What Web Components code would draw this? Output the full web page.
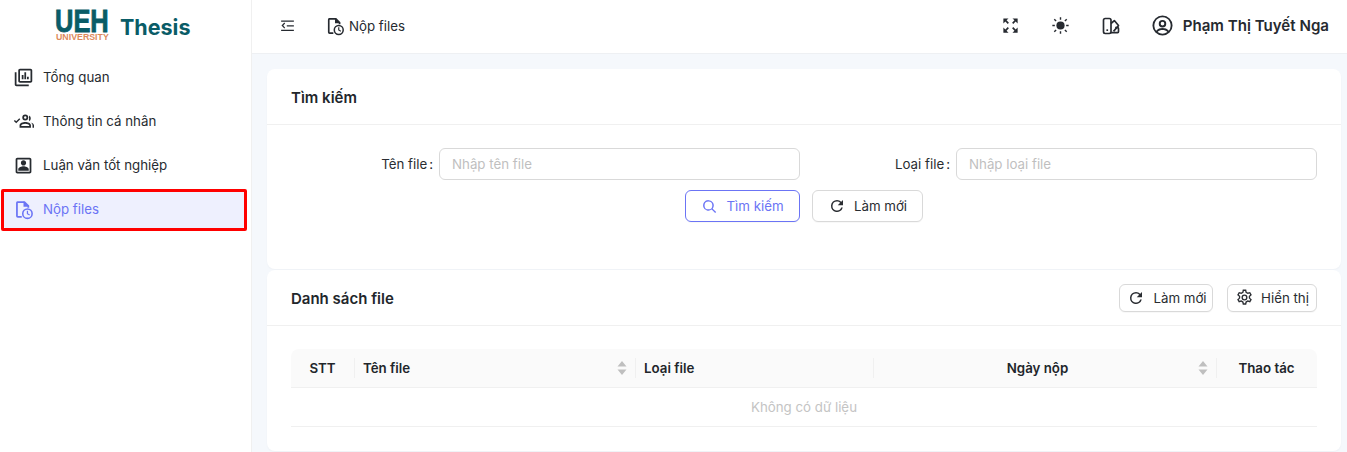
<!DOCTYPE html>
<html>
<head>
<meta charset="utf-8">
<style>
  html, body { margin: 0; height: 100%; overflow: hidden; }
  body { font-family: Inter, "Noto Sans", sans-serif; font-size: 13.3px; color: #1f2328; background: #f5f8fc; }
</style>
</head>
<body>
<app-shell>
  <side-bar slot="side">
    <nav-item icon="books" label="Tổng quan"></nav-item>
    <nav-item icon="people" label="Thông tin cá nhân"></nav-item>
    <nav-item icon="badge" label="Luận văn tốt nghiệp"></nav-item>
    <nav-item icon="file" label="Nộp files" active></nav-item>
  </side-bar>
  <top-bar slot="top"></top-bar>
  <search-card></search-card>
  <file-list></file-list>
</app-shell>

<script>
const ICONS = {
  books: `<path d="M4 6H2v14c0 1.1.9 2 2 2h14v-2H4V6zm16-4H8c-1.1 0-2 .9-2 2v12c0 1.1.9 2 2 2h12c1.1 0 2-.9 2-2V4c0-1.1-.9-2-2-2zm0 14H8V4h12v12zM10 9h2v5h-2zm3-3h2v8h-2zm3 5h2v3h-2z"/>`,
  people: `<path d="M14 4a3.400 3.400 0 1 0 0 6.800a3.400 3.400 0 0 0 0-6.800zm0 2a1.400 1.400 0 1 1 0 2.800a1.400 1.400 0 0 1 0-2.800zM19 5.200l-.9 1.700a3.400 3.400 0 0 1 0 3l.9 1.700a5 5 0 0 0 0-6.400zM14 12.500c-2.800 0-6.500 1.300-6.500 3.900V19h13v-2.600c0-2.600-3.700-3.900-6.500-3.900zm0 2c2.200 0 4.300.9 4.500 1.900v.6h-9v-.6c.2-1 2.300-1.900 4.500-1.900zM20 13c1.500.7 2.300 1.900 2.300 3.400V19H24v-2.800c0-1.500-1.700-2.600-4-3.200zM1 11.300l1.100-1.100 1.600 1.600 3.500-3.500 1.100 1.100-4.600 4.600z"/>`,
  badge: `<path d="M19 5v14H5V5h14m0-2H5c-1.110 0-2 .9-2 2v14c0 1.100.89 2 2 2h14c1.100 0 2-.9 2-2V5c0-1.100-.9-2-2-2zm-7 9c-1.650 0-3-1.350-3-3s1.350-3 3-3 3 1.350 3 3-1.350 3-3 3zm6 6H6v-1.530c0-2.500 3.970-3.580 6-3.580s6 1.080 6 3.580V18z"/>`,
  file: `<path d="M5 2.500h8.500l5 5V10h-2V8.300L12.700 4.500H5.500v15H10v2H5.500A2 2 0 0 1 3.500 19.500v-15a2 2 0 0 1 1.500-2z"/><path d="M12 2.500l6.500 6.300H12z"/><path fill-rule="evenodd" d="M16.500 10.500a6.250 6.250 0 1 0 0 12.500a6.250 6.250 0 0 0 0-12.500zm0 1.800a4.450 4.450 0 1 1 0 8.900a4.450 4.450 0 0 1 0-8.900z"/><path d="M15.800 13.500h1.400v3l2.200 1.300-.7 1.100-2.900-1.700z"/>`,
  collapse: `<path d="M3 5h18v1.800H3zM3 18h18v1.800H3zM11 11.500h10v1.800H11zM7.500 7.800l1.200 1.200-2.700 3 2.700 3-1.200 1.200L3.500 12z"/>`,
  expand: `<path d="M3 3h6.500L7 5.500l3 3L8.500 10l-3-3L3 9.500zM21 3v6.500L18.500 7l-3 3L14 8.500l3-3L14.500 3zM3 21v-6.500L5.500 17l3-3 1.500 1.500-3 3L9.500 21zM21 21h-6.500l2.500-2.500-3-3 1.500-1.500 3 3 2.500-2.500z"/>`,
  sun: `<circle cx="12" cy="12" r="5.800"/><path d="M11 0.500h2V4h-2zM11 20h2v3.500h-2zM0.500 11H4v2H0.500zM20 11h3.500v2H20zM3.900 2.500l2.600 2.600-1.400 1.400-2.600-2.600zM18.900 17.500l2.600 2.600-1.400 1.400-2.600-2.600zM2.500 20.100l2.600-2.600 1.400 1.400-2.600 2.600zM17.500 5.100l2.600-2.600 1.400 1.400-2.600 2.600z"/>`,
  palette: `<rect x="3" y="3" width="9" height="18" rx="2" fill="none" stroke="currentColor" stroke-width="2"/><path d="M12 9l4-3.500 5 6-6 7" fill="none" stroke="currentColor" stroke-width="2" stroke-linejoin="round"/><path d="M12 20h8a1 1 0 0 0 1-1v-4a1 1 0 0 0-1-1h-3" fill="none" stroke="currentColor" stroke-width="2"/><rect x="6.500" y="16" width="2" height="2"/>`,
  user: `<path fill-rule="evenodd" d="M12 1.500a10.500 10.500 0 1 0 0 21a10.500 10.500 0 0 0 0-21zm0 2a8.500 8.500 0 0 1 6.600 13.850C16.900 15.500 14.500 14.700 12 14.700s-4.900.8-6.600 2.650A8.500 8.500 0 0 1 12 3.500zm0 2.700a3.900 3.900 0 1 0 0 7.800a3.900 3.900 0 0 0 0-7.800zm0 2a1.900 1.900 0 1 1 0 3.800a1.900 1.900 0 0 1 0-3.800zm0 8.500c1.950 0 3.800.6 5.100 2a8.500 8.500 0 0 1-10.200 0c1.300-1.400 3.150-2 5.100-2z"/>`,
  search: `<path d="M10.500 3a7.500 7.500 0 1 0 4.600 13.400l4.900 4.900 1.400-1.400-4.900-4.900A7.500 7.500 0 0 0 10.500 3zm0 2a5.500 5.500 0 1 1 0 11a5.500 5.500 0 0 1 0-11z"/>`,
  reload: `<path d="M17.650 6.350A7.960 7.960 0 0 0 12 4a8 8 0 1 0 7.730 10h-2.080A6 6 0 1 1 12 6c1.660 0 3.140.69 4.220 1.780L13 11h7V4l-2.350 2.350z"/>`,
  gear: `<path fill-rule="evenodd" d="M9.800 2h4.400l.6 2.900 1.500.9 2.800-.9 2.200 3.800-2.200 2v1.800l2.200 2-2.200 3.800-2.800-.9-1.500.9-.6 2.700H9.800l-.6-2.700-1.500-.9-2.800.9-2.200-3.800 2.200-2v-1.800l-2.200-2 2.200-3.800 2.800.9 1.500-.9zm1.400 1.700-.5 2.300-2.700 1.600-2.300-.7-.9 1.500 1.800 1.600v3.100l-1.800 1.600.9 1.500 2.300-.7 2.700 1.600.5 2.200h1.600l.5-2.200 2.700-1.600 2.300.7.9-1.500-1.800-1.600v-3.100l1.800-1.600-.9-1.500-2.300.7-2.700-1.600-.5-2.300z"/><path fill-rule="evenodd" d="M12 8.200a3.800 3.800 0 1 0 0 7.600a3.800 3.800 0 0 0 0-7.600zm0 1.700a2.100 2.100 0 1 1 0 4.200a2.100 2.100 0 0 1 0-4.200z"/>`
};

class UiIcon extends HTMLElement {
  connectedCallback() {
    const size = this.getAttribute("size") || 20;
    this.attachShadow({ mode: "open" }).innerHTML = `
      <style>:host { display: inline-flex; flex: none; } svg { display: block; fill: currentColor; }</style>
      <svg width="${size}" height="${size}" viewBox="0 0 24 24">${ICONS[this.getAttribute("name")]}</svg>`;
  }
}

class AppShell extends HTMLElement {
  connectedCallback() {
    this.attachShadow({ mode: "open" }).innerHTML = `
      <style>
        :host { display: grid; grid-template-columns: 252px 1fr; grid-template-rows: 54px 1fr; height: 452px; }
        .side { grid-row: 1 / 3; }
        main { display: flex; flex-direction: column; gap: 1px; padding: 15px 6px 0 15px; min-width: 0; }
      </style>
      <div class="side"><slot name="side"></slot></div>
      <slot name="top"></slot>
      <main><slot></slot></main>`;
  }
}

class SideBar extends HTMLElement {
  connectedCallback() {
    this.attachShadow({ mode: "open" }).innerHTML = `
      <style>
        :host { display: block; height: 452px; box-sizing: border-box; background: #fff; border-right: 1px solid #f0f0f0; }
        .logo { display: flex; align-items: flex-start; height: 53px; padding: 3px 0 0 55px; gap: 11px; box-sizing: border-box; }
        .mark { display: block; flex: none; overflow: visible; }
        .mark text { font-family: "Liberation Sans", sans-serif; font-weight: 700; }
        .ueh { font-size: 30.500px; fill: #0a5c67; stroke: #0a5c67; stroke-width: .8px; }
        .uni { font-size: 8.800px; fill: #dd8a5c; }
        .name { font: 700 21.500px/1 Inter, sans-serif; color: #0a5c67; margin-top: 14px; }
        nav { display: flex; flex-direction: column; gap: 4px; padding: 4px 7px 0 4px; }
      </style>
      <div class="logo">
        <svg class="mark" width="54" height="40" viewBox="0 0 54 40">
          <text class="ueh" transform="translate(0 29) scale(.835 1)">UEH</text>
          <text class="uni" x="1" y="37">UNIVERSITY</text>
        </svg>
        <span class="name">Thesis</span>
      </div>
      <nav><slot></slot></nav>`;
  }
}

class NavItem extends HTMLElement {
  connectedCallback() {
    const active = this.hasAttribute("active");
    this.attachShadow({ mode: "open" }).innerHTML = `
      <style>
        :host { display: flex; position: relative; align-items: center; gap: 9px; height: 40px; padding-left: 9px; border-radius: 4px; color: #272b30; }
        :host([active]) { background: #eef0fe; color: #6b74f5; }
        .mark { position: absolute; left: -3px; right: -3px; top: 0; bottom: -2px; border: 3px solid #f00; border-radius: 2px; }
      </style>
      <ui-icon name="${this.getAttribute("icon")}" size="21"></ui-icon>
      <span>${this.getAttribute("label")}</span>
      ${active ? '<div class="mark"></div>' : ""}`;
  }
}

class TopBar extends HTMLElement {
  connectedCallback() {
    this.attachShadow({ mode: "open" }).innerHTML = `
      <style>
        :host { display: flex; align-items: center; height: 54px; box-sizing: border-box; padding: 0 18px 2px 27px; background: #fff; border-bottom: 1px solid #eef0f3; color: #262a30; font-size: 13.300px; }
        .crumb { display: flex; align-items: center; gap: 4px; margin-left: 29px; }
        .right { display: flex; align-items: center; margin-left: auto; }
        .expand { margin-right: 32px; }
        .sun { margin-right: 32px; }
        .pal { margin-right: 30px; }
        .who { font-size: 15.100px; font-weight: 600; margin-left: 9px; white-space: nowrap; }
      </style>
      <ui-icon name="collapse" size="17"></ui-icon>
      <div class="crumb"><ui-icon name="file" size="20"></ui-icon><span>Nộp files</span></div>
      <div class="right">
        <ui-icon class="expand" name="expand" size="19"></ui-icon>
        <ui-icon class="sun" name="sun" size="17"></ui-icon>
        <ui-icon class="pal" name="palette" size="20"></ui-icon>
        <ui-icon name="user" size="23"></ui-icon>
        <span class="who">Phạm Thị Tuyết Nga</span>
      </div>`;
  }
}

class UiButton extends HTMLElement {
  connectedCallback() {
    this.attachShadow({ mode: "open" }).innerHTML = `
      <style>
        :host { display: inline-flex; align-items: center; justify-content: center; box-sizing: border-box; height: 32px; padding: 0; gap: 8px; background: #fff; border: 1px solid #d9d9d9; border-radius: 6px; color: #2a2d32; font-size: 13.300px; white-space: nowrap; box-shadow: 0 1px 1px rgba(0,0,0,.03); }
        :host([primary]) { border-color: #6b74f5; color: #6b74f5; }
      </style>
      <ui-icon name="${this.getAttribute("icon")}" size="${this.getAttribute("isize") || 16}"></ui-icon>
      <span><slot></slot></span>`;
  }
}

class PanelCard extends HTMLElement {
  connectedCallback() {
    this.attachShadow({ mode: "open" }).innerHTML = `
      <style>
        :host { display: block; background: #fff; border-radius: 8px; box-shadow: 0 1px 2px rgba(0,0,0,.03); }
        header { display: flex; align-items: center; justify-content: space-between; height: 55px; padding: 0 24px; border-bottom: 1px solid #f0f0f0; font-size: 15px; font-weight: 600; color: #22262b; }
        header > span { margin-top: 2px; }
        .extra { display: flex; gap: 14px; font-weight: 400; }
        .body { padding: 23px 24px 0; }
      </style>
      <header><span>${this.getAttribute("heading")}</span><div class="extra"><slot name="extra"></slot></div></header>
      <div class="body"><slot></slot></div>`;
  }
}

class FieldInput extends HTMLElement {
  connectedCallback() {
    this.attachShadow({ mode: "open" }).innerHTML = `
      <style>
        :host { display: flex; align-items: center; justify-content: flex-end; color: #2a2d32; font-size: 13.300px; }
        label { white-space: nowrap; margin-right: 6px; }
        label i { font-style: normal; margin-left: 2px; }
        .box { box-sizing: border-box; height: 32px; width: var(--w); padding: 0 12px; display: flex; align-items: center; border: 1px solid #d9d9d9; border-radius: 6px; color: #bfbfbf; }
      </style>
      <label>${this.getAttribute("label")}<i>:</i></label>
      <div class="box">${this.getAttribute("hint")}</div>`;
  }
}

class SearchCard extends HTMLElement {
  connectedCallback() {
    this.attachShadow({ mode: "open" }).innerHTML = `
      <style>
        :host { display: block; height: 200px; }
        panel-card { height: 100%; }
        .fields { display: grid; grid-template-columns: 509px 517px; --w: 361px; }
        .actions { display: flex; justify-content: center; gap: 12px; margin-top: 10px; }
        .actions ui-button { width: 115px; }
        .actions ui-button + ui-button { width: 111px; }
      </style>
      <panel-card heading="Tìm kiếm">
        <div class="fields">
          <field-input label="Tên file" hint="Nhập tên file"></field-input>
          <field-input label="Loại file" hint="Nhập loại file"></field-input>
        </div>
        <div class="actions">
          <ui-button primary icon="search" isize="17">Tìm kiếm</ui-button>
          <ui-button icon="reload" isize="18">Làm mới</ui-button>
        </div>
      </panel-card>`;
  }
}

class FileList extends HTMLElement {
  connectedCallback() {
    this.attachShadow({ mode: "open" }).innerHTML = `
      <style>
        :host { display: block; height: 181px; }
        panel-card { height: 100%; }
        ui-button { height: 28px; width: 94px; padding-left: 2px; }
        ui-button + ui-button { width: 90px; gap: 7px; padding-left: 0; }
      </style>
      <panel-card heading="Danh sách file">
        <ui-button slot="extra" icon="reload" isize="18">Làm mới</ui-button>
        <ui-button slot="extra" icon="gear" isize="19">Hiển thị</ui-button>
        <file-table></file-table>
      </panel-card>`;
  }
}

class FileTable extends HTMLElement {
  connectedCallback() {
    const sorter = `<svg class="sort" width="10" height="14" viewBox="0 0 10 14"><path d="M5 0l4.500 5.500h-9zM5 14L.5 8.500h9z"/></svg>`;
    this.attachShadow({ mode: "open" }).innerHTML = `
      <style>
        :host { display: block; }
        .head { display: grid; grid-template-columns: 63px 281px 238px 1fr 101px; height: 38px; background: #fafafa; border-bottom: 1px solid #f0f0f0; border-radius: 8px 8px 0 0; font-size: 13.300px; font-weight: 600; color: #22262b; }
        .cell { position: relative; display: flex; align-items: center; padding: 0 9px; }
        .cell + .cell::before { content: ""; position: absolute; left: 0; top: 9px; bottom: 9px; width: 1px; background: #f0f0f0; }
        .center { justify-content: center; }
        .pad { padding-right: 23px; }
        .sort { position: absolute; right: 8px; fill: #bfbfbf; }
        .empty { height: 38px; display: flex; align-items: center; justify-content: center; border-bottom: 1px solid #f0f0f0; color: #c4c4c4; }
      </style>
      <div class="head">
        <div class="cell center">STT</div>
        <div class="cell">Tên file${sorter}</div>
        <div class="cell">Loại file</div>
        <div class="cell center pad">Ngày nộp${sorter}</div>
        <div class="cell center">Thao tác</div>
      </div>
      <div class="empty">Không có dữ liệu</div>`;
  }
}

customElements.define("ui-icon", UiIcon);
customElements.define("app-shell", AppShell);
customElements.define("side-bar", SideBar);
customElements.define("nav-item", NavItem);
customElements.define("top-bar", TopBar);
customElements.define("ui-button", UiButton);
customElements.define("panel-card", PanelCard);
customElements.define("field-input", FieldInput);
customElements.define("search-card", SearchCard);
customElements.define("file-list", FileList);
customElements.define("file-table", FileTable);
</script>
</body>
</html>
